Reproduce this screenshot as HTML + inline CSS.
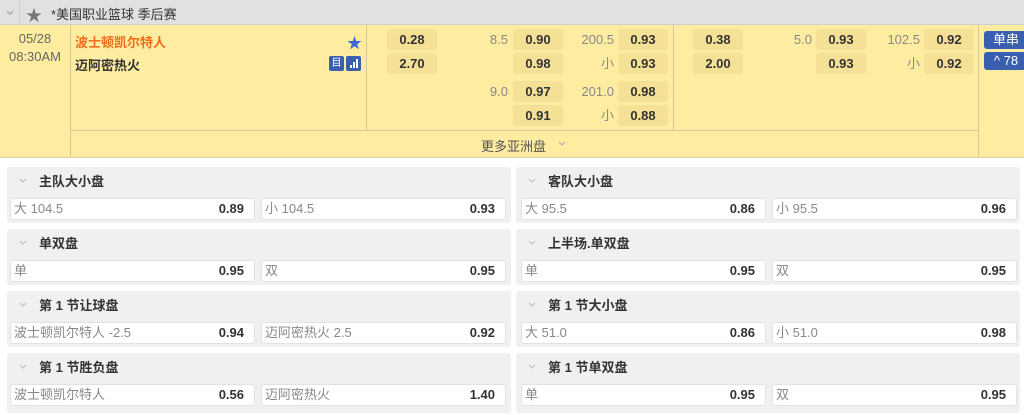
<!DOCTYPE html>
<html><head><meta charset="utf-8"><style>
*{margin:0;padding:0;box-sizing:border-box}
body{width:1024px;height:415px;background:#fff;font-family:"Liberation Sans","Noto Sans CJK SC",sans-serif;font-size:13px;color:#333;position:relative;overflow:hidden}
.a{position:absolute}
.hdr{left:0;top:0;width:1024px;height:25px;background:#e1e1e1;border-bottom:1px solid #cfcfcf}
.yl{left:0;top:25px;width:1024px;height:133px;background:#feeda1;border-bottom:1px solid #d8d0a8}
.vl{width:1px;background:#d3c99a}
.ob{width:50px;height:21px;background:#f5e196;border-radius:3px;text-align:center;line-height:21px;font-weight:bold;font-size:13px;color:#333}
.lb{width:50px;text-align:right;line-height:21px;color:#888;font-size:13px}
.pn{width:504px;height:56px;background:#f0f0f0;border-radius:3px}
.pn .t{position:absolute;left:32px;top:4px;font-weight:bold;font-size:13px;color:#333}
.pn svg.ch{position:absolute;left:11px;top:10px}
.c{position:absolute;top:31px;width:245px;height:22px;background:#fff;border:1px solid #e2e2e2;border-radius:3px;line-height:20px;padding:0 10px 0 3px;color:#888}
.c b{float:right;color:#333}
.btn{background:#3a5fb0;color:#fff;border-radius:3px;text-align:center;font-size:13px}
</style></head><body>
<div class="a hdr"></div>
<div class="a" style="left:0;top:0;width:20px;height:25px;border-right:1px solid #cfcfcf"><svg width="20" height="25"><path d="M7 11l3 3 3-3" stroke="#999" fill="none"/></svg></div>
<div class="a" style="left:26px;top:2px;color:#777;font-size:16px">★</div>
<div class="a" style="left:51px;top:4px;font-size:13px;color:#333">*美国职业篮球 季后赛</div>
<div class="a yl"></div>
<div class="a vl" style="left:70px;top:25px;height:133px"></div>
<div class="a vl" style="left:366px;top:25px;height:105px"></div>
<div class="a vl" style="left:673px;top:25px;height:105px"></div>
<div class="a vl" style="left:978px;top:25px;height:133px"></div>
<div class="a" style="left:71px;top:130px;width:907px;height:1px;background:#d3c99a"></div>
<div class="a" style="left:0;top:30px;width:70px;text-align:center;color:#666;font-size:13px;line-height:18px">05/28<br>08:30AM</div>
<div class="a" style="left:75px;top:32px;color:#f36b1c;font-weight:bold;font-size:13px">波士顿凯尔特人</div>
<div class="a" style="left:75px;top:55px;color:#333;font-weight:bold;font-size:13px">迈阿密热火</div>
<div class="a" style="left:347px;top:32px;color:#3a68d4;font-size:15px">★</div>
<div class="a" style="left:329px;top:56px;width:15px;height:15px;background:#3a5fb0;border-radius:2px;color:#fff;font-size:10px;text-align:center;line-height:15px">目</div>
<div class="a" style="left:346px;top:56px;width:15px;height:15px;background:#3a5fb0;border-radius:2px"><svg width="15" height="15"><rect x="4" y="9" width="2" height="3" fill="#fff"/><rect x="7" y="6" width="2" height="6" fill="#fff"/><rect x="10" y="3" width="2" height="9" fill="#fff"/></svg></div>

<div class="a ob" style="left:387px;top:29px">0.28</div>
<div class="a ob" style="left:387px;top:53px">2.70</div>
<div class="a lb" style="left:458px;top:29px">8.5</div>
<div class="a ob" style="left:513px;top:29px">0.90</div>
<div class="a ob" style="left:513px;top:53px">0.98</div>
<div class="a lb" style="left:564px;top:29px">200.5</div>
<div class="a lb" style="left:564px;top:53px">小</div>
<div class="a ob" style="left:618px;top:29px">0.93</div>
<div class="a ob" style="left:618px;top:53px">0.93</div>
<div class="a lb" style="left:458px;top:81px">9.0</div>
<div class="a ob" style="left:513px;top:81px">0.97</div>
<div class="a ob" style="left:513px;top:105px">0.91</div>
<div class="a lb" style="left:564px;top:81px">201.0</div>
<div class="a lb" style="left:564px;top:105px">小</div>
<div class="a ob" style="left:618px;top:81px">0.98</div>
<div class="a ob" style="left:618px;top:105px">0.88</div>

<div class="a ob" style="left:693px;top:29px">0.38</div>
<div class="a ob" style="left:693px;top:53px">2.00</div>
<div class="a lb" style="left:762px;top:29px">5.0</div>
<div class="a ob" style="left:816px;top:29px">0.93</div>
<div class="a ob" style="left:816px;top:53px">0.93</div>
<div class="a lb" style="left:870px;top:29px">102.5</div>
<div class="a lb" style="left:870px;top:53px">小</div>
<div class="a ob" style="left:924px;top:29px">0.92</div>
<div class="a ob" style="left:924px;top:53px">0.92</div>

<div class="a" style="left:481px;top:136px;color:#555;font-size:13px">更多亚洲盘</div>
<svg class="a" style="left:557px;top:140px" width="10" height="8"><path d="M2 2l3 3 3-3" stroke="#aaa" fill="none"/></svg>
<div class="a btn" style="left:984px;top:31px;width:44px;height:18px;line-height:18px">单串</div>
<div class="a btn" style="left:984px;top:52px;width:44px;height:18px;line-height:18px">^ 78</div>

<div class="a pn" style="left:7px;top:167px"><svg class="ch" width="10" height="8"><path d="M2 2l3 3 3-3" stroke="#bbb" fill="none"/></svg><span class="t">主队大小盘</span><div class="c" style="left:3px">大 104.5<b>0.89</b></div><div class="c" style="left:254px">小 104.5<b>0.93</b></div></div>
<div class="a pn" style="left:516px;top:167px"><svg class="ch" width="10" height="8"><path d="M2 2l3 3 3-3" stroke="#bbb" fill="none"/></svg><span class="t">客队大小盘</span><div class="c" style="left:5px">大 95.5<b>0.86</b></div><div class="c" style="left:256px">小 95.5<b>0.96</b></div></div>
<div class="a pn" style="left:7px;top:229px"><svg class="ch" width="10" height="8"><path d="M2 2l3 3 3-3" stroke="#bbb" fill="none"/></svg><span class="t">单双盘</span><div class="c" style="left:3px">单<b>0.95</b></div><div class="c" style="left:254px">双<b>0.95</b></div></div>
<div class="a pn" style="left:516px;top:229px"><svg class="ch" width="10" height="8"><path d="M2 2l3 3 3-3" stroke="#bbb" fill="none"/></svg><span class="t">上半场.单双盘</span><div class="c" style="left:5px">单<b>0.95</b></div><div class="c" style="left:256px">双<b>0.95</b></div></div>
<div class="a pn" style="left:7px;top:291px"><svg class="ch" width="10" height="8"><path d="M2 2l3 3 3-3" stroke="#bbb" fill="none"/></svg><span class="t">第 1 节让球盘</span><div class="c" style="left:3px">波士顿凯尔特人 -2.5<b>0.94</b></div><div class="c" style="left:254px">迈阿密热火 2.5<b>0.92</b></div></div>
<div class="a pn" style="left:516px;top:291px"><svg class="ch" width="10" height="8"><path d="M2 2l3 3 3-3" stroke="#bbb" fill="none"/></svg><span class="t">第 1 节大小盘</span><div class="c" style="left:5px">大 51.0<b>0.86</b></div><div class="c" style="left:256px">小 51.0<b>0.98</b></div></div>
<div class="a pn" style="left:7px;top:353px;height:60px"><svg class="ch" width="10" height="8"><path d="M2 2l3 3 3-3" stroke="#bbb" fill="none"/></svg><span class="t">第 1 节胜负盘</span><div class="c" style="left:3px">波士顿凯尔特人<b>0.56</b></div><div class="c" style="left:254px">迈阿密热火<b>1.40</b></div></div>
<div class="a pn" style="left:516px;top:353px;height:60px"><svg class="ch" width="10" height="8"><path d="M2 2l3 3 3-3" stroke="#bbb" fill="none"/></svg><span class="t">第 1 节单双盘</span><div class="c" style="left:5px">单<b>0.95</b></div><div class="c" style="left:256px">双<b>0.95</b></div></div>
</body></html>
